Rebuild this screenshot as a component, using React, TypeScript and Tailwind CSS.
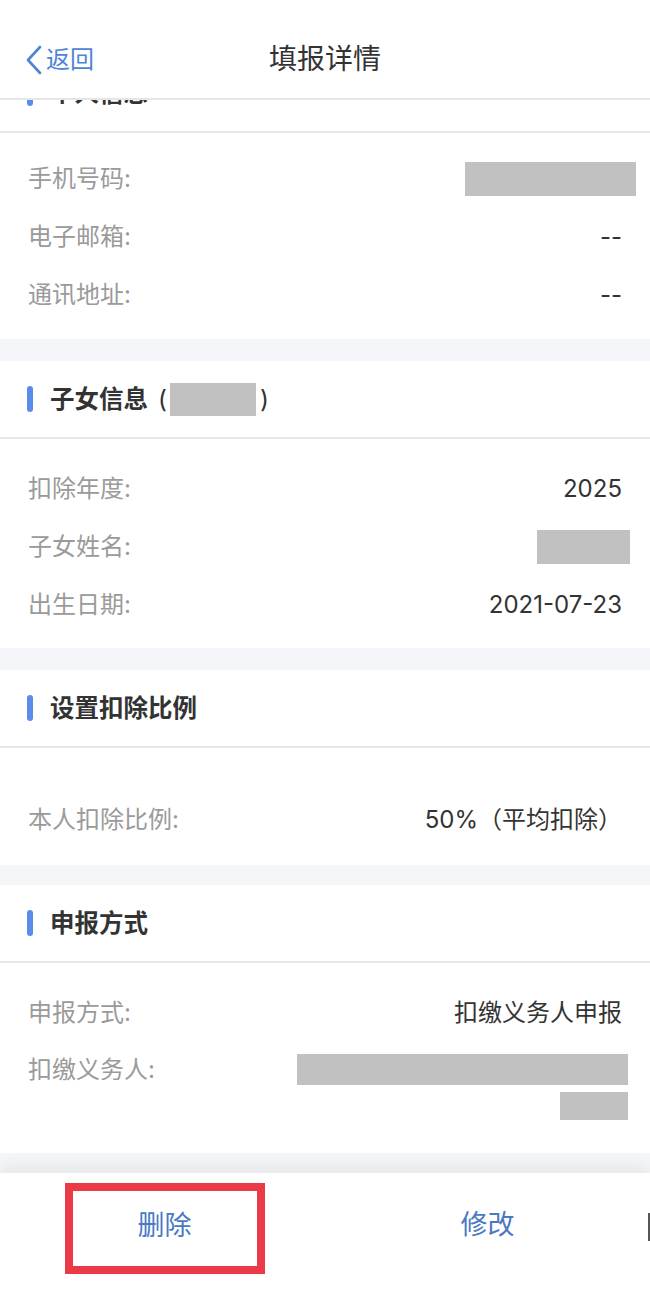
const font = { fontFamily: 'Inter, "Noto Sans CJK SC", "Noto Sans", sans-serif' }

function Header({ title, children }: { title: string; children?: React.ReactNode }) {
  return (
    <div className="flex h-[78px] items-center border-b-2 border-[#e8e8ea] bg-white px-[27px]">
      <span className="mr-[17px] h-[26px] w-[6px] rounded-full bg-[#5a8cec]" />
      <span className="text-[24.5px] font-bold text-[#333]">{title}</span>
      {children}
    </div>
  )
}

function Row({ label, children }: { label: string; children?: React.ReactNode }) {
  return (
    <div className="flex h-[58px] items-center justify-between">
      <span className="text-[24px] text-[#9a9a9a]">{label}</span>
      <span className="whitespace-nowrap text-[24px] text-[#333]">{children}</span>
    </div>
  )
}

function Redact({ w, h }: { w: number; h: number }) {
  return <span className="block bg-[#c1c1c1]" style={{ width: w, height: h }} />
}

export default function App() {
  return (
    <div className="flex h-[1292px] w-[650px] flex-col overflow-hidden bg-[#f4f6f9]" style={font}>
      <div className="relative z-10 flex h-[100px] shrink-0 items-center border-b-2 border-[#e6e6e8] bg-white px-[25px] pt-[22px]">
        <div className="flex items-center text-[#4e84d4]">
          <svg width="18" height="32" viewBox="0 0 18 32" fill="none">
            <path d="M15 3 L3 16 L15 29" stroke="#4e84d4" strokeWidth="2.6" strokeLinecap="round" strokeLinejoin="round" />
          </svg>
          <span className="ml-[3px] text-[24px]">返回</span>
        </div>
        <div className="absolute left-0 right-0 top-[22px] flex h-[78px] items-center justify-center pb-[4px] text-[28px] text-[#333]">
          填报详情
        </div>
      </div>

      <div className="flex-1 overflow-hidden">
        <div className="mt-[-45px] bg-white">
          <Header title="个人信息" />
          <div className="px-[28px] pb-[15px] pt-[17px]">
            <Row label="手机号码:">
              <span className="mr-[-14px] block"><Redact w={171} h={34} /></span>
            </Row>
            <Row label="电子邮箱:">--</Row>
            <Row label="通讯地址:">--</Row>
          </div>
        </div>

        <div className="mt-[22px] bg-white">
          <Header title="子女信息">
            <span className="ml-[10px] text-[24.5px] text-[#333]">(</span>
            <span className="ml-[3px]"><Redact w={86} h={33} /></span>
            <span className="ml-[4px] text-[24.5px] text-[#333]">)</span>
          </Header>
          <div className="px-[28px] pb-[14px] pt-[21px]">
            <Row label="扣除年度:">2025</Row>
            <Row label="子女姓名:">
              <span className="mr-[-8px] block"><Redact w={93} h={34} /></span>
            </Row>
            <Row label="出生日期:">2021-07-23</Row>
          </div>
        </div>

        <div className="mt-[22px] bg-white">
          <Header title="设置扣除比例" />
          <div className="px-[28px] pb-[16px] pt-[43px]">
            <Row label="本人扣除比例:">
              <span>50%（平均扣除）</span>
            </Row>
          </div>
        </div>

        <div className="mt-[20px] bg-white">
          <Header title="申报方式" />
          <div className="px-[28px] pb-[33px] pt-[21px]">
            <Row label="申报方式:">扣缴义务人申报</Row>
            <div className="flex justify-between">
              <span className="mt-[13px] text-[24px] leading-[30px] text-[#9a9a9a]">扣缴义务人:</span>
              <div className="mr-[-6px] mt-[12px] flex flex-col items-end gap-[7px]">
                <Redact w={331} h={31} />
                <Redact w={68} h={28} />
              </div>
            </div>
          </div>
        </div>
      </div>

      <div className="relative grid h-[119px] shrink-0 grid-cols-2 bg-white shadow-[0_-8px_14px_rgba(0,0,0,0.06)]">
        <div className="flex items-start justify-center pl-[4px] pt-[10px]">
          <div className="flex h-[91px] w-[200px] items-center justify-center border-[8px] border-[#ea3a48] pb-[4px] text-[27px] text-[#4a78c4]">
            删除
          </div>
        </div>
        <div className="flex items-center justify-center pb-[14px] text-[27px] text-[#4a78c4]">修改</div>
        <span className="absolute right-0 top-[40px] h-[28px] w-[2px] bg-[#555]" />
      </div>
    </div>
  )
}
